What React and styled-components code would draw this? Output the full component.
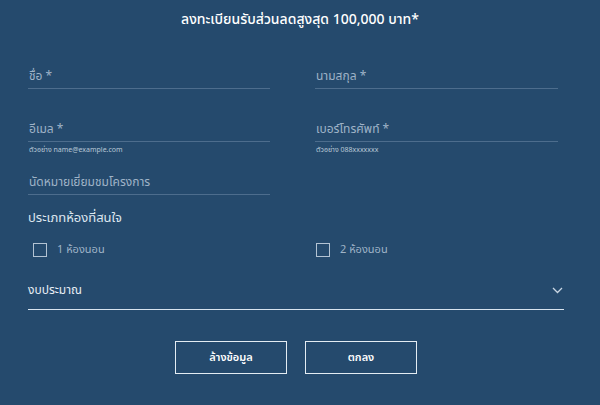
import React from 'react';
import styled, { createGlobalStyle } from 'styled-components';

const GlobalStyle = createGlobalStyle`
  html, body {
    margin: 0;
    padding: 0;
    background: #254a6d;
  }
  body {
    font-family: "Noto Sans Thai", "Noto Sans", "Liberation Sans", sans-serif;
  }
`;

const App = () => {
  return (
    <>
      <GlobalStyle />
      <Form>
        <Title>ลงทะเบียนรับส่วนลดสูงสุด 100,000 บาท*</Title>

        <FieldGrid>
          <Field>
            <Label>ชื่อ *</Label>
          </Field>
          <Field>
            <Label>นามสกุล *</Label>
          </Field>
          <Field>
            <Label>อีเมล *</Label>
            <Hint>ตัวอย่าง name@example.com</Hint>
          </Field>
          <Field>
            <Label>เบอร์โทรศัพท์ *</Label>
            <Hint>ตัวอย่าง 088xxxxxxx</Hint>
          </Field>
          <Field>
            <Label>นัดหมายเยี่ยมชมโครงการ</Label>
          </Field>
        </FieldGrid>

        <SectionTitle>ประเภทห้องที่สนใจ</SectionTitle>
        <CheckRow>
          <CheckItem>
            <Box />
            <CheckText>1 ห้องนอน</CheckText>
          </CheckItem>
          <CheckItem>
            <Box />
            <CheckText>2 ห้องนอน</CheckText>
          </CheckItem>
        </CheckRow>

        <Select>
          <SelectText>งบประมาณ</SelectText>
          <svg width="11" height="7" viewBox="0 0 11 7" fill="none">
            <path d="M1 1l4.5 4.5L10 1" stroke="#c9d6e3" strokeWidth="1.3" />
          </svg>
        </Select>

        <Buttons>
          <Button>ล้างข้อมูล</Button>
          <Button>ตกลง</Button>
        </Buttons>
      </Form>
    </>
  );
};

export default App;

const Form = styled.div`
  width: 600px;
  height: 405px;
  box-sizing: border-box;
  padding: 10px 36px 0 28px;
  background: #254a6d;
`;

const Title = styled.div`
  text-align: center;
  color: #ffffff;
  font-size: 14px;
  font-weight: 500;
  padding-left: 8px;
  line-height: 20px;
`;

const FieldGrid = styled.div`
  display: grid;
  grid-template-columns: 242px 243px;
  column-gap: 45px;
  margin-top: 34px;
`;

const Field = styled.div`
  height: 53px;
`;

const Label = styled.div`
  color: #9fb3c7;
  font-size: 12px;
  line-height: 16px;
  padding: 4px 0 4px 1px;
  border-bottom: 1px solid #4d6d8d;
`;

const Hint = styled.div`
  color: #b8c7d6;
  font-size: 7px;
  line-height: 10px;
  margin-top: 3px;
  padding-left: 1px;
`;

const SectionTitle = styled.div`
  color: #dde6ef;
  font-size: 13px;
  line-height: 18px;
  margin-top: -14px;
`;

const CheckRow = styled.div`
  display: grid;
  grid-template-columns: 283px 1fr;
  margin-top: 15px;
  padding-left: 5px;
`;

const CheckItem = styled.div`
  display: flex;
  align-items: center;
  gap: 10px;
`;

const Box = styled.span`
  width: 14px;
  height: 14px;
  box-sizing: border-box;
  border: 1px solid #b3c3d3;
`;

const CheckText = styled.span`
  color: #9fb3c7;
  font-size: 11px;
  line-height: 16px;
`;

const Select = styled.div`
  display: flex;
  justify-content: space-between;
  align-items: center;
  margin-top: 24px;
  width: 536px;
  padding: 0 1px 11px 0;
  box-sizing: border-box;
  border-bottom: 1px solid #d8e4ef;
`;

const SelectText = styled.span`
  color: #e6edf4;
  font-size: 12px;
  line-height: 16px;
`;

const Buttons = styled.div`
  display: flex;
  justify-content: center;
  gap: 18px;
  margin-top: 31px;
`;

const Button = styled.button`
  width: 112px;
  height: 33px;
  background: transparent;
  border: 1.5px solid #e4ecf3;
  color: #ffffff;
  font-family: inherit;
  font-size: 11px;
  font-weight: 600;
  cursor: pointer;
`;
